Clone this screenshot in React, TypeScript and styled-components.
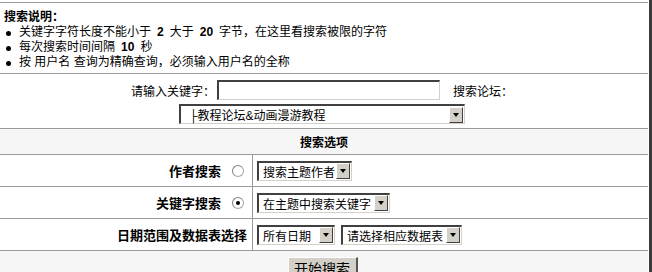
import styled, { createGlobalStyle } from 'styled-components';

const GlobalStyle = createGlobalStyle`
  html, body {
    margin: 0;
    padding: 0;
    background: #fff;
  }
  body {
    font-family: "Liberation Sans", "Noto Sans CJK SC", sans-serif;
    font-size: 12px;
    color: #000;
  }
`;

const Frame = styled.div`
  width: 652px;
  height: 272px;
  overflow: hidden;
  box-sizing: border-box;
  padding-top: 2px;
  border-right: 3px solid #3a3a3a;
`;

const Panel = styled.div`
  border-top: 1px solid #9a9a9a;
  width: 648px;
`;

const Notes = styled.div`
  height: 71px;
  padding: 7px 0 0 4px;
  box-sizing: border-box;
  border-bottom: 1px solid #9a9a9a;
`;

const NotesTitle = styled.div`
  font-weight: bold;
  font-size: 12px;
  line-height: 14px;
  margin-bottom: 1px;
`;

const NoteList = styled.ul`
  list-style: none;
  margin: 0;
  padding: 0;

  > li {
    position: relative;
    padding-left: 15px;
    line-height: 15px;
  }

  > li::before {
    content: '';
    position: absolute;
    left: 2px;
    top: 6px;
    width: 5px;
    height: 5px;
    border-radius: 50%;
    background: #000;
  }

  b {
    margin: 0 6px;
  }
`;

const KeywordArea = styled.div`
  height: 55px;
  box-sizing: border-box;
  padding-top: 6px;
  border-bottom: 1px solid #9a9a9a;
  display: flex;
  flex-direction: column;
  align-items: center;
  gap: 4px;
`;

const KeywordLine = styled.div`
  display: flex;
  align-items: center;
  margin-right: 4px;
`;

const TextInput = styled.div`
  width: 223px;
  height: 20px;
  box-sizing: border-box;
  border-top: 2px solid #404040;
  border-left: 2px solid #404040;
  border-right: 1px solid #d4d0c8;
  border-bottom: 1px solid #d4d0c8;
  margin: 0 13px 0 2px;
  background: #fff;
`;

const Label = styled.span`
  white-space: nowrap;
  font-size: 12px;
`;

const SelectBox = styled.div<{ $w: number }>`
  width: ${p => p.$w}px;
  height: 20px;
  box-sizing: border-box;
  display: flex;
  align-items: center;
  justify-content: space-between;
  border-top: 2px solid #404040;
  border-left: 2px solid #404040;
  border-right: 1px solid #d4d0c8;
  border-bottom: 1px solid #d4d0c8;
  background: #fff;
  padding-left: 4px;
  font-size: 12px;
  white-space: nowrap;
`;

const ArrowButton = styled.span`
  width: 14px;
  height: 16px;
  box-sizing: border-box;
  margin-right: 1px;
  background: #d4d0c8;
  border-top: 1px solid #fff;
  border-left: 1px solid #fff;
  border-right: 1px solid #404040;
  border-bottom: 1px solid #404040;
  display: flex;
  align-items: center;
  justify-content: center;
  flex-shrink: 0;

  &::after {
    content: '';
    border-left: 3px solid transparent;
    border-right: 3px solid transparent;
    border-top: 4px solid #000;
  }
`;

const ForumSelect = styled(SelectBox)`
  padding-left: 8px;
  margin-right: 4px;
`;

const SectionHead = styled.div`
  height: 26px;
  box-sizing: border-box;
  background: #f6f6f6;
  border-bottom: 1px solid #9a9a9a;
  display: flex;
  align-items: center;
  justify-content: center;
  font-weight: bold;
  font-size: 12px;
`;

const OptionRow = styled.div`
  display: grid;
  grid-template-columns: 253px 1fr;
  height: 32px;
  border-bottom: 1px solid #9a9a9a;
  box-sizing: border-box;
`;

const RowLabel = styled.div`
  display: flex;
  align-items: center;
  justify-content: flex-end;
  gap: 11px;
  padding-right: 8px;
  border-right: 1px solid #9a9a9a;
  font-weight: bold;
  font-size: 13px;
`;

const DateLabel = styled(RowLabel)`
  padding-right: 5px;
`;

const Radio = styled.span<{ $on?: boolean }>`
  width: 10px;
  height: 10px;
  border-radius: 50%;
  border: 1px solid #a8a8a8;
  border-top-color: #808080;
  border-left-color: #808080;
  background: #fff;
  display: flex;
  align-items: center;
  justify-content: center;

  &::after {
    content: '';
    width: 4px;
    height: 4px;
    border-radius: 50%;
    background: ${p => (p.$on ? '#000' : 'transparent')};
  }
`;

const RowControls = styled.div`
  display: flex;
  align-items: center;
  gap: 6px;
  padding-left: 4px;
`;

const ButtonBar = styled.div`
  height: 21px;
  background: #f6f6f6;
  display: flex;
  justify-content: center;
  padding-top: 6px;
  padding-right: 3px;
`;

const SubmitButton = styled.button`
  width: 70px;
  height: 24px;
  box-sizing: border-box;
  background: #d4d0c8;
  border-top: 1px solid #fff;
  border-left: 1px solid #fff;
  border-right: 2px solid #555;
  border-bottom: 2px solid #555;
  font-family: "Liberation Sans", "Noto Sans CJK SC", sans-serif;
  font-size: 14px;
  padding: 0;
  line-height: 18px;
  color: #000;
`;

function Select({ width, label }: { width: number; label: string }) {
  return (
    <SelectBox $w={width}>
      <span>{label}</span>
      <ArrowButton />
    </SelectBox>
  );
}

export default function App() {
  return (
    <>
      <GlobalStyle />
      <Frame>
        <Panel>
          <Notes>
            <NotesTitle>搜索说明：</NotesTitle>
            <NoteList>
              <li>关键字字符长度不能小于<b>2</b>大于<b>20</b>字节，在这里看搜索被限的字符</li>
              <li>每次搜索时间间隔<b>10</b>秒</li>
              <li>按 用户名 查询为精确查询，必须输入用户名的全称</li>
            </NoteList>
          </Notes>

          <KeywordArea>
            <KeywordLine>
              <Label>请输入关键字：</Label>
              <TextInput />
              <Label>搜索论坛：</Label>
            </KeywordLine>
            <ForumSelect $w={286}>
              <span>├教程论坛&amp;动画漫游教程</span>
              <ArrowButton />
            </ForumSelect>
          </KeywordArea>

          <SectionHead>搜索选项</SectionHead>

          <OptionRow>
            <RowLabel>作者搜索<Radio /></RowLabel>
            <RowControls>
              <Select width={95} label="搜索主题作者" />
            </RowControls>
          </OptionRow>

          <OptionRow>
            <RowLabel>关键字搜索<Radio $on /></RowLabel>
            <RowControls>
              <Select width={133} label="在主题中搜索关键字" />
            </RowControls>
          </OptionRow>

          <OptionRow>
            <DateLabel>日期范围及数据表选择</DateLabel>
            <RowControls>
              <Select width={78} label="所有日期" />
              <Select width={121} label="请选择相应数据表" />
            </RowControls>
          </OptionRow>

          <ButtonBar>
            <SubmitButton>开始搜索</SubmitButton>
          </ButtonBar>
        </Panel>
      </Frame>
    </>
  );
}
